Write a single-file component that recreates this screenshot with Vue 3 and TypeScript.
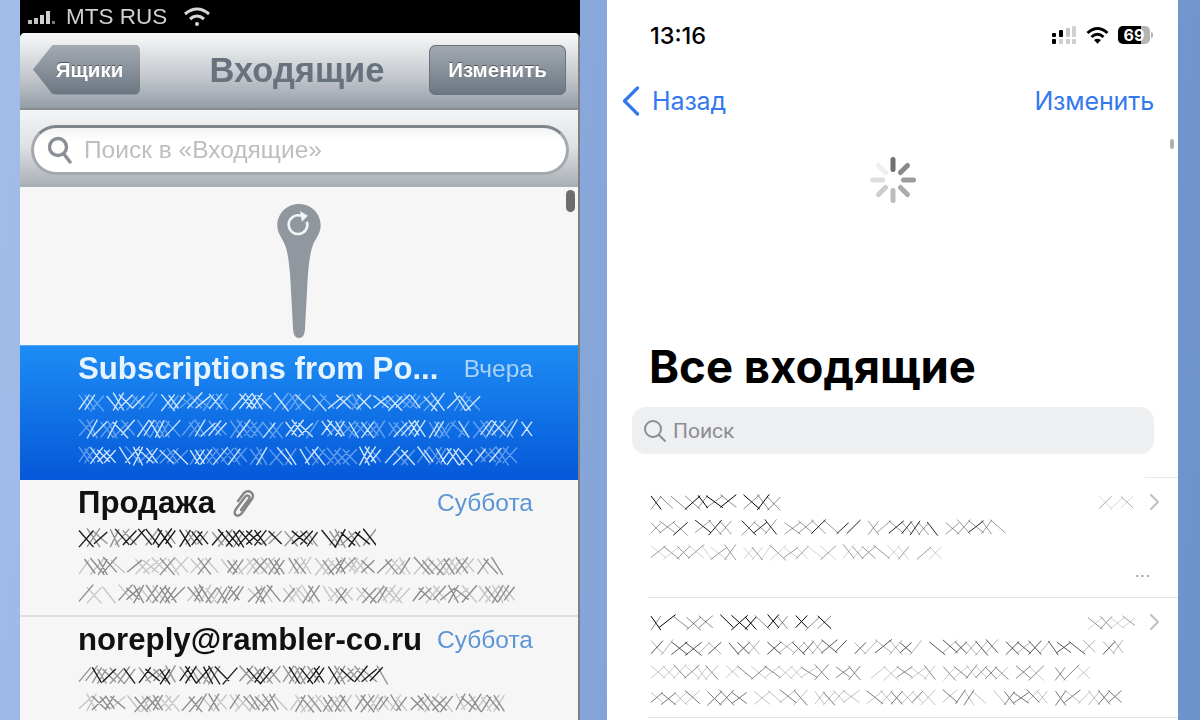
<template>
  <div class="page">
    <section class="old-phone">
      <div class="old-status">
        <svg class="old-bars" width="36" height="16" viewBox="0 0 36 16">
          <rect x="0" y="11" width="4" height="4" fill="#bdbdbd" />
          <rect x="6" y="9" width="4" height="6" fill="#c4c4c4" />
          <rect x="12" y="6" width="4" height="9" fill="#d0d0d0" />
          <rect x="18" y="2" width="4" height="13" fill="#d0d0d0" />
          <rect x="24" y="12" width="3" height="3" fill="#777" />
        </svg>
        <span class="carrier">MTS RUS</span>
        <svg class="old-wifi" width="28" height="22" viewBox="0 0 28 22" fill="none" stroke="#d8d8d8" stroke-width="3">
          <path d="M2 8 Q14 -2 26 8" />
          <path d="M7 13 Q14 7 21 13" />
          <circle cx="14" cy="18" r="2" fill="#d8d8d8" stroke="none" />
        </svg>
      </div>
      <div class="old-body">
        <header class="old-nav">
          <button class="old-btn back">Ящики</button>
          <h1>Входящие</h1>
          <button class="old-btn edit">Изменить</button>
        </header>
        <div class="old-search-band">
          <div class="old-search">
            <svg width="26" height="28" viewBox="0 0 26 28" fill="none" stroke="#8a8f95" stroke-width="3.4">
              <circle cx="11" cy="11" r="8.5" />
              <path d="M17 18 L23 26" stroke-linecap="round" />
            </svg>
            <span>Поиск в «Входящие»</span>
          </div>
        </div>
        <div class="pull">
          <svg width="44" height="134" viewBox="0 0 44 136">
            <path d="M22 0 C34 0 44 9 44 22 C44 30 38 36 36 42 C33 50 32 62 31 72 L28 128 Q27.5 136 22 136 Q16.5 136 16 128 L13 72 C12 62 11 50 8 42 C6 36 0 30 0 22 C0 9 10 0 22 0Z" fill="#90979f" />
            <path d="M30 18 A9.5 9.5 0 1 1 24 12" fill="none" stroke="#f4f5f6" stroke-width="2.6" />
            <path d="M23 7 L31 12 L25 18 Z" fill="#f4f5f6" />
          </svg>
        </div>
        <article v-for="m in oldMails" :key="m.from" class="old-row" :class="{ selected: m.selected }">
          <div class="old-head">
            <strong>{{ m.from }}</strong>
            <svg v-if="m.clip" class="clip" width="26" height="29" viewBox="0 0 26 29" fill="none" stroke="#858585" stroke-width="2.4" stroke-linecap="round">
              <path d="M12 21 L20 10 C22 7 18 5 16 8 L7 20 C3 26 9 29 13 24 L23 10 C26 4 20 0 15 4 L9 12" />
            </svg>
            <span class="old-date">{{ m.date }}</span>
          </div>
          <div class="old-lines">
            <Scrib v-for="(l, i) in m.lines" :key="i" :line="l" />
          </div>
        </article>
        <span class="old-scroll"></span>
      </div>
    </section>

    <section class="new-phone">
      <div class="new-status">
        <span class="time">13:16</span>
        <div class="status-icons">
          <svg width="25" height="18" viewBox="0 0 25 18">
            <rect x="0" y="7" width="4" height="4" rx="1" fill="#000" />
            <rect x="7" y="4" width="4" height="7" rx="1" fill="#000" />
            <rect x="14" y="2" width="4" height="9" rx="1" fill="#c4c4c4" />
            <rect x="20" y="0" width="4" height="11" rx="1" fill="#d0d0d0" />
            <rect x="0" y="13" width="4" height="5" rx="1" fill="#000" />
            <rect x="7" y="13" width="4" height="5" rx="1" fill="#ccc" />
            <rect x="14" y="13" width="4" height="5" rx="1" fill="#ccc" />
            <rect x="20" y="13" width="4" height="5" rx="1" fill="#ccc" />
          </svg>
          <svg width="23" height="18" viewBox="0 0 23 18" fill="none" stroke="#000" stroke-width="3">
            <path d="M1.5 7 Q11.5 -2 21.5 7" />
            <path d="M5.5 11 Q11.5 5.5 17.5 11" />
            <path d="M8 14 L11.5 17.8 L15 14 Q11.5 11.5 8 14Z" fill="#000" stroke="none" />
          </svg>
          <div class="battery">
            <div class="battery-body">69</div>
            <i></i>
          </div>
        </div>
      </div>
      <nav class="new-nav">
        <a class="back-link">
          <svg width="18" height="30" viewBox="0 0 18 30" fill="none" stroke="#3478f0" stroke-width="3.2" stroke-linecap="round" stroke-linejoin="round">
            <path d="M15.5 2 L2.5 15 L15.5 28" />
          </svg>
          Назад
        </a>
        <a>Изменить</a>
      </nav>
      <div class="spinner-wrap">
        <svg width="48" height="48" viewBox="-24 -24 48 48">
          <rect v-for="(c, i) in spinner" :key="i" x="-2.5" y="-23" width="5" height="15" rx="2.5" :fill="c" :transform="`rotate(${i * 45})`" />
        </svg>
      </div>
      <h2>Все входящие</h2>
      <div class="new-search">
        <svg width="24" height="24" viewBox="0 0 24 24" fill="none" stroke="#8b8d92" stroke-width="2">
          <circle cx="10" cy="10" r="8" />
          <path d="M16 16 L22 22" stroke-linecap="round" />
        </svg>
        <span>Поиск</span>
      </div>
      <div class="top-rule"></div>
      <article v-for="(m, n) in newMails" :key="n" class="new-row">
        <div class="new-head">
          <Scrib :line="m.name" />
          <div class="new-right">
            <Scrib :line="m.date" />
            <svg width="11" height="18" viewBox="0 0 11 18" fill="none" stroke="#c2c2c6" stroke-width="2.2" stroke-linecap="round" stroke-linejoin="round">
              <path d="M2 2 L9 9 L2 16" />
            </svg>
          </div>
        </div>
        <Scrib v-for="(l, i) in m.lines" :key="i" :line="l" class="new-line" />
        <span v-if="m.more" class="more">...</span>
      </article>
      <span class="new-scroll"></span>
    </section>
  </div>
</template>

<script setup lang="ts">
import { h } from 'vue'

interface Line {
  w: number
  h: number
  color: string
  seed: number
  step: number
  sw: number
  adv: number
}

// crossed out text from the original screenshot, drawn as hatching.
// returns two layers: strong strokes and faint ones
function hatch(l: Line): [string, string] {
  let s = l.seed * 7919 + 13
  const rnd = () => {
    s = (s * 16807) % 2147483647
    return (s % 1000) / 1000
  }
  const layers: [string, string] = ['', '']
  const add = (x1: number, y1: number, x2: number, y2: number) => {
    const i = rnd() > 0.5 ? 0 : 1
    layers[i] += `M${x1.toFixed(1)} ${y1.toFixed(1)}L${x2.toFixed(1)} ${y2.toFixed(1)}`
  }
  let x = 1
  let word = 3 + Math.floor(rnd() * 6)
  while (x < l.w - l.step) {
    const cw = l.step * (0.8 + rnd() * 0.6)
    const top = l.h * (0.02 + rnd() * 0.2)
    const bot = l.h * (0.78 + rnd() * 0.2)
    if (rnd() > 0.1) add(x, top, x + cw, bot)
    if (rnd() > 0.1) add(x + cw, top, x, bot)
    x += cw * l.adv
    if (--word <= 0) {
      x += l.step * 0.8
      word = 3 + Math.floor(rnd() * 7)
    }
  }
  return layers
}

const Scrib = (props: { line: Line }) => {
  const l = props.line
  const [strong, faint] = hatch(l)
  return h('svg', { width: l.w, height: l.h, viewBox: `0 0 ${l.w} ${l.h}`, class: 'scrib' }, [
    h('path', { d: faint, stroke: l.color, 'stroke-opacity': 0.45, 'stroke-width': l.sw, fill: 'none' }),
    h('path', { d: strong, stroke: l.color, 'stroke-width': l.sw, fill: 'none' }),
  ])
}
Scrib.props = ['line']

const dense = (w: number, color: string, seed: number): Line => ({ w, h: 20, color, seed, step: 11, sw: 1.4, adv: 0.55 })
const thin = (w: number, color: string, seed: number): Line => ({ w, h: 17, color, seed, step: 12, sw: 1, adv: 0.85 })

const oldMails = [
  {
    from: 'Subscriptions from Po...',
    date: 'Вчера',
    selected: true,
    clip: false,
    lines: [dense(404, '#cfe6ff', 1), dense(456, '#cfe6ff', 2), dense(450, '#cfe6ff', 3)],
  },
  {
    from: 'Продажа',
    date: 'Суббота',
    selected: false,
    clip: true,
    lines: [dense(298, '#1c1c1c', 4), dense(438, '#8c8c8c', 5), dense(443, '#8c8c8c', 6)],
  },
  {
    from: 'noreply@rambler-co.ru',
    date: 'Суббота',
    selected: false,
    clip: false,
    lines: [dense(317, '#1c1c1c', 7), dense(427, '#8c8c8c', 8), dense(440, '#8c8c8c', 9)],
  },
]

const newMails = [
  {
    name: thin(138, '#000', 10),
    date: thin(37, '#aaa', 11),
    lines: [thin(362, '#222', 12), thin(295, '#999', 13)],
    more: true,
  },
  {
    name: thin(184, '#000', 14),
    date: thin(48, '#999', 15),
    lines: [thin(476, '#555', 16), thin(448, '#888', 17), thin(472, '#777', 18)],
    more: false,
  },
]

const spinner = ['#707070', '#8a8a8a', '#9c9c9c', '#ababab', '#bcbcbc', '#cdcdcd', '#dedede', '#efefef']
</script>

<style>
html,
body {
  margin: 0;
  overflow: hidden;
}
</style>

<style scoped>
.page {
  width: 1200px;
  height: 720px;
  overflow: hidden;
  display: flex;
  padding-left: 20px;
  gap: 27px;
  box-sizing: border-box;
  background: linear-gradient(97deg, #a3bdea 0, #86a6da 50%, #6c93ca 100%);
  font-family: 'Liberation Sans', Arial, sans-serif;
}

/* old iPhone */
.old-phone {
  width: 560px;
  height: 720px;
  display: flex;
  flex-direction: column;
  background: #000;
  filter: blur(0.7px);
  flex: none;
}
.old-status {
  height: 33px;
  flex: none;
  display: flex;
  align-items: center;
  padding-left: 8px;
  color: #cfcfcf;
  font-size: 22.5px;
  background: #000;
}
.old-bars {
  margin-right: 2px;
}
.carrier {
  margin-right: 16px;
}
.old-body {
  flex: 1;
  position: relative;
  background: #f6f6f7;
  border-radius: 5px 5px 0 0;
  overflow: hidden;
  border-right: 2px solid #808080;
  min-height: 0;
}
.old-nav {
  height: 77px;
  box-sizing: border-box;
  display: flex;
  align-items: center;
  justify-content: space-between;
  padding: 0 12px 2px 13px;
  background: linear-gradient(#f8f9fa 0, #e6e8ea 20%, #c2c6cb 60%, #959da6 100%);
  border-bottom: 2px solid #868c93;
}
.old-nav h1 {
  margin: 2px 0 0 25px;
  font-size: 34.5px;
  font-weight: 700;
  color: #68727d;
}
.old-btn {
  height: 50px;
  border: none;
  padding: 0;
  color: #fff;
  font: 700 20.5px 'Liberation Sans', Arial, sans-serif;
  background: linear-gradient(#a3aab2, #6c7681);
  text-shadow: 0 -1px 0 #555;
}
.old-btn.back {
  width: 107px;
  padding-left: 6px;
  clip-path: path('M19 1 Q21 0 24 0 H101 Q107 0 107 6 V44 Q107 50 101 50 H24 Q21 50 19 49 L0 25 Z');
}
.old-btn.edit {
  width: 137px;
  border-radius: 7px;
  box-shadow: inset 0 0 0 1px #6a727b;
}
.old-search-band {
  height: 77px;
  box-sizing: border-box;
  padding: 15px 9px 0 11px;
  background: linear-gradient(#f3f4f5 0, #e0e2e4 45%, #a8aeb5 100%);
}
.old-search {
  height: 50px;
  box-sizing: border-box;
  border: 3px solid #a4a9af;
  border-top-color: #7f858c;
  border-radius: 25px;
  background: linear-gradient(#f2f2f2, #fff 30%);
  display: flex;
  align-items: center;
  gap: 11px;
  padding-left: 13px;
  color: #bcbec1;
  font-size: 24.5px;
}
.pull {
  height: 158px;
  box-sizing: border-box;
  padding-top: 17px;
  display: flex;
  justify-content: center;
  align-items: flex-start;
}
.old-row {
  height: 137px;
  box-sizing: border-box;
  padding: 4px 0 0 58px;
  border-bottom: 2px solid #dfdfe1;
}
.old-row.selected {
  height: 135px;
  background: linear-gradient(#1d8cf5, #0558d8);
  border-bottom: none;
  border-top: 1px solid #5aa9f0;
  color: #fff;
}
.old-head {
  display: flex;
  align-items: center;
  height: 38px;
  padding-right: 45px;
}
.old-head strong {
  font-size: 31.2px;
  font-weight: 700;
  color: #111;
}
.selected .old-head strong {
  color: #e6f4ff;
}
.clip {
  margin-left: 14px;
}
.old-date {
  margin-left: auto;
  font-size: 24.5px;
  color: #5d95d6;
}
.selected .old-date {
  color: #a9d2f6;
}
.old-lines {
  margin-top: 6px;
  display: flex;
  flex-direction: column;
  gap: 8px;
}
.selected .old-lines {
  margin-top: 4px;
  gap: 7px;
}
.scrib {
  display: block;
  flex: none;
}
.old-scroll {
  position: absolute;
  right: 3px;
  top: 157px;
  width: 9px;
  height: 22px;
  border-radius: 5px;
  background: #6d6d6d;
}

/* new iPhone */
.new-phone {
  width: 571px;
  height: 720px;
  flex: none;
  position: relative;
  overflow: hidden;
  background: #fff;
  font-family: Inter, 'Liberation Sans', sans-serif;
}
.new-status {
  height: 70px;
  box-sizing: border-box;
  display: flex;
  align-items: center;
  justify-content: space-between;
  padding: 0 25px 0 43px;
}
.time {
  font-size: 23.5px;
  font-weight: 500;
  color: #000;
}
.status-icons {
  display: flex;
  align-items: center;
  gap: 9px;
}
.battery {
  display: flex;
  align-items: center;
  gap: 1px;
}
.battery-body {
  width: 32px;
  height: 18px;
  border-radius: 5px;
  background: linear-gradient(90deg, #000 72%, #b4b4b4 72%);
  color: #fff;
  font-size: 16px;
  font-weight: 700;
  line-height: 18px;
  text-align: center;
}
.battery i {
  width: 2px;
  height: 6px;
  background: #b4b4b4;
  border-radius: 0 2px 2px 0;
}
.new-nav {
  height: 60px;
  box-sizing: border-box;
  padding: 2px 24px 0 15px;
  display: flex;
  align-items: center;
  justify-content: space-between;
  color: #3478f0;
  font-size: 25px;
  letter-spacing: -0.12px;
}
.back-link {
  display: flex;
  align-items: center;
  gap: 12px;
}
.spinner-wrap {
  height: 212px;
  box-sizing: border-box;
  padding-top: 26px;
  display: flex;
  justify-content: center;
  align-items: flex-start;
  margin-left: 1px;
}
.new-phone h2 {
  margin: 0 0 15px 42px;
  height: 50px;
  line-height: 50px;
  font-size: 45.5px;
  font-weight: 700;
  color: #000;
  font-family: Inter, sans-serif;
}
.new-search {
  margin: 0 24px 0 25px;
  height: 47px;
  border-radius: 14px;
  background: #eeeff1;
  display: flex;
  align-items: center;
  gap: 6px;
  padding-left: 11px;
  color: #8b8d92;
  font-size: 21px;
  font-family: Roboto, sans-serif;
}
.top-rule {
  height: 1px;
  margin: 23px 0 0 538px;
  background: #e8e8ea;
}
.new-row {
  position: relative;
  box-sizing: border-box;
  height: 120px;
  margin-left: 41px;
  padding: 15px 18px 0 2px;
  border-bottom: 1px solid #e2e2e4;
}
.new-head {
  display: flex;
  justify-content: space-between;
  align-items: center;
  margin-bottom: 8px;
}
.new-right {
  display: flex;
  align-items: center;
  gap: 14px;
}
.new-line {
  margin-bottom: 8px;
}
.more {
  position: absolute;
  right: 27px;
  bottom: 16px;
  font-size: 15px;
  color: #999;
  letter-spacing: 1px;
}
.new-scroll {
  position: absolute;
  right: 4px;
  top: 139px;
  width: 4px;
  height: 10px;
  border-radius: 2px;
  background: #b0b0b0;
}
</style>
